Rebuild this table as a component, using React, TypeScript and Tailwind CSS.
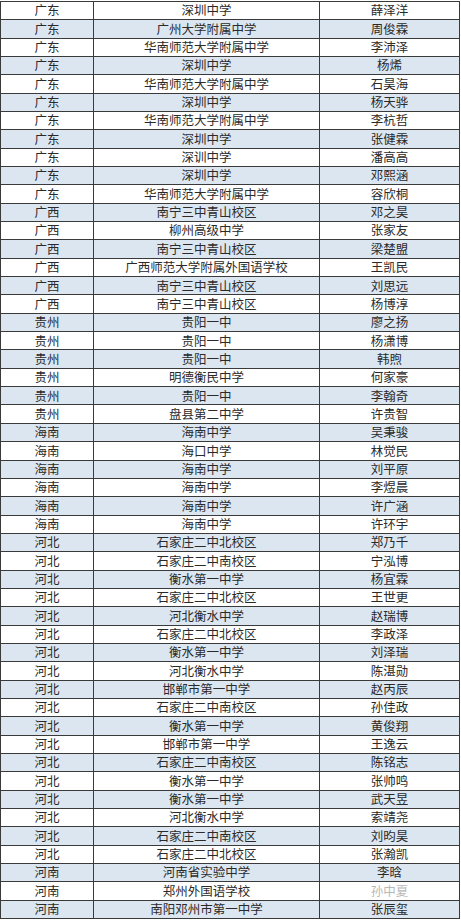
import React from 'react';

type Row = [string, string, string];

const rows: Row[] = [
  ['广东', '深圳中学', '薛泽洋'],
  ['广东', '广州大学附属中学', '周俊霖'],
  ['广东', '华南师范大学附属中学', '李沛泽'],
  ['广东', '深圳中学', '杨烯'],
  ['广东', '华南师范大学附属中学', '石昊海'],
  ['广东', '深圳中学', '杨天骅'],
  ['广东', '华南师范大学附属中学', '李杭哲'],
  ['广东', '深圳中学', '张健霖'],
  ['广东', '深训中学', '潘高高'],
  ['广东', '深圳中学', '邓熙涵'],
  ['广东', '华南师范大学附属中学', '容欣桐'],
  ['广西', '南宁三中青山校区', '邓之昊'],
  ['广西', '柳州高级中学', '张家友'],
  ['广西', '南宁三中青山校区', '梁楚盟'],
  ['广西', '广西师范大学附属外国语学校', '王凯民'],
  ['广西', '南宁三中青山校区', '刘思远'],
  ['广西', '南宁三中青山校区', '杨博淳'],
  ['贵州', '贵阳一中', '廖之扬'],
  ['贵州', '贵阳一中', '杨潇博'],
  ['贵州', '贵阳一中', '韩煦'],
  ['贵州', '明德衡民中学', '何家豪'],
  ['贵州', '贵阳一中', '李翰奇'],
  ['贵州', '盘县第二中学', '许贵智'],
  ['海南', '海南中学', '吴秉骏'],
  ['海南', '海口中学', '林觉民'],
  ['海南', '海南中学', '刘平原'],
  ['海南', '海南中学', '李煜晨'],
  ['海南', '海南中学', '许广涵'],
  ['海南', '海南中学', '许环宇'],
  ['河北', '石家庄二中北校区', '郑乃千'],
  ['河北', '石家庄二中南校区', '宁泓博'],
  ['河北', '衡水第一中学', '杨宜霖'],
  ['河北', '石家庄二中北校区', '王世更'],
  ['河北', '河北衡水中学', '赵瑞博'],
  ['河北', '石家庄二中北校区', '李政泽'],
  ['河北', '衡水第一中学', '刘泽瑞'],
  ['河北', '河北衡水中学', '陈湛勋'],
  ['河北', '邯郸市第一中学', '赵丙辰'],
  ['河北', '石家庄二中南校区', '孙佳政'],
  ['河北', '衡水第一中学', '黄俊翔'],
  ['河北', '邯郸市第一中学', '王逸云'],
  ['河北', '石家庄二中南校区', '陈铭志'],
  ['河北', '衡水第一中学', '张帅鸣'],
  ['河北', '衡水第一中学', '武天昱'],
  ['河北', '河北衡水中学', '索靖尧'],
  ['河北', '石家庄二中南校区', '刘昀昊'],
  ['河北', '石家庄二中北校区', '张瀚凯'],
  ['河南', '河南省实验中学', '李晗'],
  ['河南', '郑州外国语学校', '孙中夏'],
  ['河南', '南阳邓州市第一中学', '张辰玺'],
];

const App = () => {
  return (
    <div
      className="w-[461px] h-[920px] bg-white overflow-hidden pt-px"
      style={{ fontFamily: '"Noto Sans CJK SC", "Noto Sans", sans-serif' }}
    >
      <div className="w-[460px] h-[918px] grid grid-rows-[repeat(50,1fr)] border-t border-l border-[#3a3a3a] text-[12.5px] text-[#2a2a2a]">
        {rows.map(([prov, school, name], i) => (
          <div
            key={i}
            className={`grid grid-cols-[93px_226px_1fr] border-b border-[#3a3a3a] leading-none ${
              i % 2 === 1 ? 'bg-[#dce6f1]' : 'bg-white'
            }`}
          >
            <div className="flex items-center justify-center border-r border-[#3a3a3a]">{prov}</div>
            <div className="flex items-center justify-center border-r border-[#3a3a3a]">{school}</div>
            <div
              className={`flex items-center justify-center border-r border-[#3a3a3a] ${
                i === 48 ? 'text-[#b8b8b8]' : ''
              }`}
            >
              {name}
            </div>
          </div>
        ))}
      </div>
    </div>
  );
};

export default App;
